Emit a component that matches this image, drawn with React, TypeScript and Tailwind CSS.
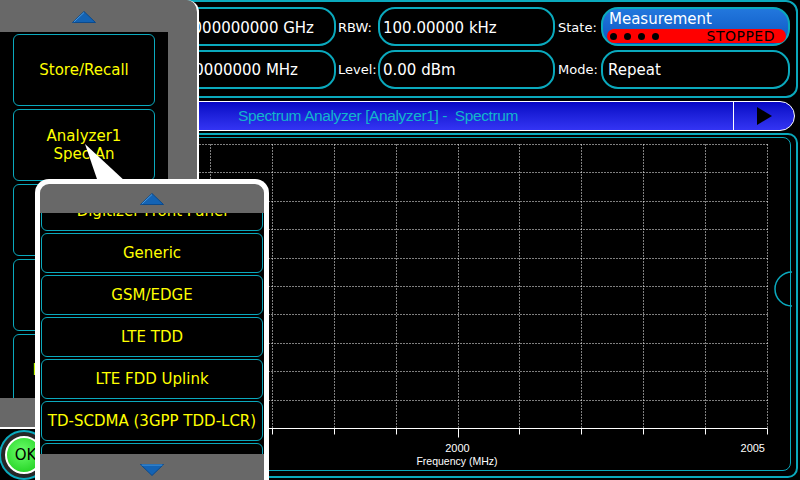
import { ReactNode } from 'react';

const leftButtons = [['Store/Recall'], ['Analyzer1', 'Spec An'], ['Freq/Span'], ['Amplitude'], ['Measurement']];

const menuItems = [
    'Digitizer Front Panel',
    'Generic',
    'GSM/EDGE',
    'LTE TDD',
    'LTE FDD Uplink',
    'TD-SCDMA (3GPP TDD-LCR)',
    'WCDMA',
];

function Arrow({ down = false }: { down?: boolean }) {
    return (
        <svg width="24" height="12" viewBox="0 0 24 12">
            <polygon
                points={down ? '0.5,0.5 23.5,0.5 12,11.5' : '12,0.5 23.5,11.5 0.5,11.5'}
                fill="#1463b4"
                stroke="#0b4a8c"
                strokeWidth="1"
            />
            <polyline points={down ? '1.5,1 22.5,1' : '12,1.5 1.8,11'} fill="none" stroke="#4a9be0" strokeWidth="1" />
        </svg>
    );
}

function Field({ className, children }: { className: string; children: ReactNode }) {
    return <div className={`flex h-[39px] items-center rounded-[17px] border-2 border-[#0aa9bd] text-[15px] text-white ${className}`}>{children}</div>;
}

function Label({ className, children }: { className: string; children: ReactNode }) {
    return <div className={`flex h-[39px] items-center text-[13px] text-white ${className}`}>{children}</div>;
}

function Grid() {
    // page coords shifted by the inner panel origin (55, 138)
    const xs = Array.from({ length: 11 }, (_, i) => Math.round(148 + i * 61.9) - 55 + 0.5);
    const ys = Array.from({ length: 11 }, (_, j) => Math.round(144 + j * 28.4) - 138 + 0.5);
    return (
        <svg className="absolute inset-0 overflow-visible" width="735" height="332">
            {xs.map((x) => (
                <line key={`v${x}`} x1={x} y1={ys[0]} x2={x} y2={ys[10]} stroke="#fff" strokeDasharray="1 2" />
            ))}
            {ys.slice(0, 10).map((y) => (
                <line key={`h${y}`} x1={xs[0]} y1={y} x2={xs[10]} y2={y} stroke="#fff" strokeDasharray="1 2" />
            ))}
            <line x1={xs[0]} y1={ys[10]} x2={xs[10]} y2={ys[10]} stroke="#fff" />
            {xs.map((x, i) => (
                <line key={`t${x}`} x1={x} y1={ys[10]} x2={x} y2={ys[10] + (i === 5 ? 9 : 6)} stroke="#fff" />
            ))}
            <text x="402.5" y="314" fill="#fff" fontSize="11" textAnchor="middle" fontFamily="Liberation Sans, sans-serif">
                2000
            </text>
            <text x="402" y="327" fill="#fff" fontSize="10.5" textAnchor="middle" fontFamily="Liberation Sans, sans-serif">
                Frequency (MHz)
            </text>
            <text x="710" y="314" fill="#fff" fontSize="11" textAnchor="end" fontFamily="Liberation Sans, sans-serif">
                2005
            </text>
            <path d="M 737 134 A 17 17 0 0 0 737 168" fill="none" stroke="#0aa9bd" strokeWidth="1.5" />
        </svg>
    );
}

export default function App() {
    return (
        <div className="relative h-[480px] w-[800px] overflow-hidden bg-black font-['DejaVu_Sans',sans-serif]">
            {/* analyzer screen */}
            <div className="flex h-full">
                <div className="flex w-[50px] flex-col justify-end">
                    <div className="ml-[-1px] flex h-[50px] w-[50px] items-center justify-center rounded-full border-2 border-[#0aa9bd] bg-[#262626]">
                        <div className="flex h-[38px] w-[38px] items-center justify-center rounded-full border-2 border-white bg-[radial-gradient(circle_at_45%_40%,#6cff6c,#12c812)] pl-[3px] text-[15px] text-black">
                            OK
                        </div>
                    </div>
                </div>

                <div className="flex flex-1 flex-col">
                    <div className="mr-[2px] flex h-[98px] flex-col gap-[4px] rounded-[12px] border-2 border-[#0aa9bd] pt-[5px]">
                        <div className="flex">
                            <Label className="w-[43px] pl-[4px] pt-[2px]">Freq:</Label>
                            <Field className="w-[241px] justify-end pr-[20px] pt-[4px]">2.000000000 GHz</Field>
                            <Label className="w-[42px] pl-[2px] pt-[2px]">RBW:</Label>
                            <Field className="w-[177px] pl-[3px] pt-[4px]">100.00000 kHz</Field>
                            <Label className="w-[46px] pl-[3px] pt-[2px]">State:</Label>
                            <div className="flex h-[39px] w-[189px] flex-col rounded-[17px] border-2 border-[#0aa9bd] bg-gradient-to-b from-[#2277dd] to-[#0b56c2] pl-[4px] pr-[2px] pt-[1px]">
                                <div className="pl-[2px] text-[15px] leading-[18px] text-white">Measurement</div>
                                <div className="mt-[1px] flex h-[14px] items-center rounded-full bg-[#ff0000] pl-[3px] pr-[11px]">
                                    <div className="flex gap-[7px]">
                                        <span className="h-[7px] w-[7px] rounded-full bg-black" />
                                        <span className="h-[7px] w-[7px] rounded-full bg-black" />
                                        <span className="h-[7px] w-[7px] rounded-full bg-black" />
                                        <span className="h-[7px] w-[7px] rounded-full bg-black" />
                                    </div>
                                    <span className="ml-auto text-[14px] leading-[14px] tracking-[0.5px] text-black">STOPPED</span>
                                </div>
                            </div>
                        </div>
                        <div className="flex">
                            <Label className="w-[43px] pl-[4px] pt-[1px]">Span:</Label>
                            <Field className="w-[241px] justify-end pr-[36px] pt-[2px]">10.0000000 MHz</Field>
                            <Label className="w-[42px] pl-[2px] pt-[1px]">Level:</Label>
                            <Field className="w-[177px] pl-[3px] pt-[2px]">0.00 dBm</Field>
                            <Label className="w-[46px] pl-[3px] pt-[1px]">Mode:</Label>
                            <Field className="w-[189px] pl-[5px] pt-[2px]">Repeat</Field>
                        </div>
                    </div>

                    <div className="mr-[5px] mt-[3px] flex h-[30px] rounded-r-[15px] rounded-l-[6px] border border-white bg-gradient-to-b from-[#0606c4] to-[#3434f4]">
                        <div className="flex flex-1 items-center pl-[187px] font-['Liberation_Sans',sans-serif] text-[15.5px] tracking-[-0.4px] text-[#12b6cc]">
                            Spectrum Analyzer [Analyzer1] -&nbsp; Spectrum
                        </div>
                        <div className="flex w-[61px] items-center justify-center border-l border-white">
                            <svg width="15" height="18" viewBox="0 0 15 18">
                                <polygon points="0,0 15,9 0,18" fill="#000" />
                            </svg>
                        </div>
                    </div>

                    <div className="mr-[2px] mt-[2px] flex h-[345px] flex-col rounded-[10px] border-2 border-[#0aa9bd]">
                        <div className="relative mb-[5px] ml-[2px] mr-[5px] mt-[2px] flex-1 rounded-[8px] border border-[#0aa9bd]">
                            <Grid />
                        </div>
                    </div>
                </div>
            </div>

            {/* soft key panel */}
            <div className="absolute left-0 top-0 flex h-[429px] w-[199px] flex-col rounded-tr-[12px] border-b-2 border-r-2 border-white bg-[#686868]">
                <div className="flex h-[32px] w-[168px] items-center justify-center pt-[2px]">
                    <Arrow />
                </div>
                <div className="flex h-[366px] w-[168px] flex-col gap-[3px] overflow-hidden bg-black px-[13px] pt-[2px]">
                    {leftButtons.map((lines) => (
                        <div
                            key={lines.join()}
                            className="flex h-[72px] shrink-0 flex-col items-center justify-center rounded-[6px] border border-[#0aa9bd] text-[15px] leading-[18px] text-[#ffff00]"
                        >
                            {lines.map((l) => (
                                <span key={l}>{l}</span>
                            ))}
                        </div>
                    ))}
                </div>
            </div>

            {/* callout */}
            <svg className="absolute left-0 top-0" width="140" height="190">
                <polygon points="85,144 98,182 126,182" fill="#fff" />
            </svg>

            {/* measurement menu popup */}
            <div className="absolute left-[35px] top-[179px] flex h-[320px] w-[234px] flex-col overflow-hidden rounded-t-[14px] border-[5px] border-b-0 border-white bg-[#686868]">
                <div className="flex h-[29px] shrink-0 items-center justify-center">
                    <Arrow />
                </div>
                <div className="h-[241px] shrink-0 overflow-hidden bg-black">
                    <div className="mt-[-22px] flex flex-col gap-[2px] px-[1px]">
                        {menuItems.map((item) => (
                            <div
                                key={item}
                                className="flex h-[40px] shrink-0 items-center justify-center rounded-[6px] border border-[#0aa9bd] text-[15px] text-[#ffff00]"
                            >
                                {item}
                            </div>
                        ))}
                    </div>
                </div>
                <div className="flex justify-center pt-[10px]">
                    <Arrow down />
                </div>
            </div>
        </div>
    );
}
